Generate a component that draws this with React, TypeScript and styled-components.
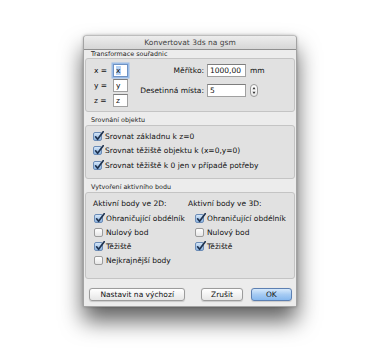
import * as React from 'react'
import styled, { createGlobalStyle } from 'styled-components'

const GlobalStyle = createGlobalStyle`
    html, body {
        margin: 0;
        padding: 0;
        background: #fff;
    }
    body {
        font-family: "DejaVu Sans", "Liberation Sans", sans-serif;
        color: #111;
    }
`

const Page = styled.div`
    width: 380px;
    height: 350px;
    box-sizing: border-box;
    padding-top: 35px;
    display: flex;
    justify-content: center;
    align-items: flex-start;
`

const Window = styled.div`
    width: 214px;
    box-sizing: border-box;
    display: flex;
    flex-direction: column;
    background: #ececec;
    border: 1px solid #a3a3a3;
    border-top-color: #bdbdbd;
    border-radius: 4px 4px 1px 1px;
    box-shadow: 0 14px 22px rgba(0, 0, 0, 0.62), 0 0 3px rgba(0, 0, 0, 0.25);
`

const TitleBar = styled.div`
    height: 13px;
    line-height: 13px;
    border-bottom: 1px solid #8f8f8f;
    border-radius: 3px 3px 0 0;
    background: linear-gradient(#ededed, #d6d6d6);
    text-align: center;
    font-size: 7.5px;
    color: #444;
`

const Body = styled.div`
    padding: 0 1px 5px;
    display: flex;
    flex-direction: column;
`

const Group = styled.div`
    margin-top: 3px;

    &:first-child {
        margin-top: 0;
    }
`

const GroupLabel = styled.div<{ $tight?: boolean }>`
    height: ${(p) => (p.$tight ? 8 : 10)}px;
    line-height: ${(p) => (p.$tight ? 8 : 10)}px;
    padding-left: 6px;
    font-size: 6.4px;
    color: #222;
`

const Box = styled.div<{ $height: number }>`
    height: ${(p) => p.$height}px;
    box-sizing: border-box;
    background: #e1e1e1;
    border: 1px solid #c4c4c4;
    border-radius: 3px;
    padding: 3px 0 0 7px;
`

const TransformBox = styled(Box)`
    display: flex;
    padding: 5px 0 0 8px;
`

const AxisCol = styled.div`
    width: 46px;
    display: flex;
    flex-direction: column;
    gap: 2px;
`

const AxisRow = styled.div`
    display: flex;
    align-items: center;
    height: 13px;
`

const AxisLabel = styled.span`
    width: 19px;
    font-size: 7.5px;
`

const Field = styled.div<{ $width: number; $focus?: boolean }>`
    width: ${(p) => p.$width}px;
    height: 13px;
    box-sizing: border-box;
    background: #fff;
    border: 1px solid ${(p) => (p.$focus ? '#6f93c4' : '#a0a0a0')};
    border-top-color: ${(p) => (p.$focus ? '#6f93c4' : '#7d7d7d')};
    box-shadow: ${(p) => (p.$focus ? '0 0 0 1.5px #9cbde8' : 'none')};
    padding-left: 2px;
    font-size: 7.5px;
    line-height: 11px;
    white-space: nowrap;
    overflow: hidden;
`

const Selected = styled.span`
    background: #b6d3f5;
    padding-right: 1px;
`

const ScaleGrid = styled.div`
    display: grid;
    grid-template-columns: 64px 39px auto;
    grid-auto-rows: 13px;
    column-gap: 3px;
    row-gap: 7px;
    align-items: center;
`

const ScaleLabel = styled.span`
    text-align: right;
    font-size: 7.5px;
    white-space: nowrap;
`

const Unit = styled.span`
    margin-left: 1px;
    font-size: 7.5px;
`

const Stepper = styled.div`
    margin-left: 1px;
    width: 8px;
    height: 13px;
    box-sizing: border-box;
    border: 1px solid #9a9a9a;
    border-radius: 4px;
    background: linear-gradient(#fff, #e9e9e9);
    display: flex;
    align-items: center;
    justify-content: center;
`

const CheckList = styled.div`
    display: flex;
    flex-direction: column;
`

const CheckRow = styled.label<{ $height?: number }>`
    display: flex;
    align-items: center;
    height: ${(p) => p.$height ?? 14}px;
    font-size: 7.5px;
    white-space: nowrap;
`

const CheckBox = styled.span<{ $on: boolean }>`
    position: relative;
    flex: none;
    width: 9px;
    height: 9px;
    box-sizing: border-box;
    margin-right: 3px;
    border-radius: 2px;
    border: 1px solid ${(p) => (p.$on ? '#6b8cb7' : '#9c9c9c')};
    background: ${(p) =>
        p.$on
            ? 'linear-gradient(#d5e6f8, #a9c8ea 55%, #8fb6e2)'
            : 'linear-gradient(#fff, #f1f1f1 55%, #e4e4e4)'};

    svg {
        position: absolute;
        left: -1px;
        top: -3px;
    }
`

const Columns = styled.div`
    display: flex;
`

const Column = styled.div<{ $width?: number; $indent?: number }>`
    width: ${(p) => (p.$width ? `${p.$width}px` : 'auto')};
    display: flex;
    flex-direction: column;

    label {
        padding-left: ${(p) => p.$indent ?? 1}px;
    }
`

const ColumnHead = styled.div`
    height: 15px;
    line-height: 15px;
    font-size: 7.5px;
`

const Buttons = styled.div`
    margin-top: 9px;
    padding: 0 3px 0 4px;
    display: flex;
    align-items: center;
    gap: 8px;
`

const Button = styled.button<{ $width: number; $primary?: boolean }>`
    width: ${(p) => p.$width}px;
    height: 13px;
    padding: 0;
    box-sizing: border-box;
    border-radius: 3px;
    border: 1px solid ${(p) => (p.$primary ? '#5d80b2' : '#9c9c9c')};
    background: ${(p) =>
        p.$primary
            ? 'linear-gradient(#d6e9fc, #a6cbf3 50%, #86b8ee)'
            : 'linear-gradient(#fff, #f3f3f3 50%, #e6e6e6)'};
    box-shadow: 0 0.5px 1px rgba(0, 0, 0, 0.15);
    font-family: inherit;
    font-size: 7.5px;
    line-height: 11px;
    color: #111;
`

const Spacer = styled.div`
    flex: 1;
`

const Check = ({ on, label, height }: { on: boolean; label: string; height?: number }) => (
    <CheckRow $height={height}>
        <CheckBox $on={on}>
            {on && (
                <svg width="12" height="12" viewBox="0 0 12 12">
                    <path
                        d="M2.6 6.8 L4.6 9.3 L10.2 1.8"
                        fill="none"
                        stroke="#1f3350"
                        strokeWidth="1.7"
                        strokeLinecap="round"
                        strokeLinejoin="round"
                    />
                </svg>
            )}
        </CheckBox>
        {label}
    </CheckRow>
)

const App: React.FC = () => (
    <Page>
        <GlobalStyle />
        <Window>
            <TitleBar>Konvertovat 3ds na gsm</TitleBar>
            <Body>
                <Group>
                    <GroupLabel $tight>Transformace souřadnic</GroupLabel>
                    <TransformBox $height={54}>
                        <AxisCol>
                            <AxisRow>
                                <AxisLabel>x =</AxisLabel>
                                <Field $width={15} $focus>
                                    <Selected>x</Selected>
                                </Field>
                            </AxisRow>
                            <AxisRow>
                                <AxisLabel>y =</AxisLabel>
                                <Field $width={15}>y</Field>
                            </AxisRow>
                            <AxisRow>
                                <AxisLabel>z =</AxisLabel>
                                <Field $width={15}>z</Field>
                            </AxisRow>
                        </AxisCol>
                        <ScaleGrid>
                            <ScaleLabel>Měřítko:</ScaleLabel>
                            <Field $width={39}>1000,00</Field>
                            <Unit>mm</Unit>
                            <ScaleLabel>Desetinná místa:</ScaleLabel>
                            <Field $width={39}>5</Field>
                            <Stepper>
                                <svg width="4" height="9" viewBox="0 0 4 9">
                                    <path d="M0.5 3.2 L2 1 L3.5 3.2 Z" fill="#333" />
                                    <path d="M0.5 5.8 L2 8 L3.5 5.8 Z" fill="#333" />
                                </svg>
                            </Stepper>
                        </ScaleGrid>
                    </TransformBox>
                </Group>
                <Group>
                    <GroupLabel>Srovnání objektu</GroupLabel>
                    <Box $height={54}>
                        <CheckList>
                            <Check on height={14.5} label="Srovnat základnu k z=0" />
                            <Check on height={14.5} label="Srovnat těžiště objektu k (x=0,y=0)" />
                            <Check on height={14.5} label="Srovnat těžiště k 0 jen v případě potřeby" />
                        </CheckList>
                    </Box>
                </Group>
                <Group>
                    <GroupLabel>Vytvoření aktivního bodu</GroupLabel>
                    <Box $height={87}>
                        <Columns>
                            <Column $width={95}>
                                <ColumnHead>Aktivní body ve 2D:</ColumnHead>
                                <Check on label="Ohraničující obdélník" />
                                <Check on={false} label="Nulový bod" />
                                <Check on label="Těžiště" />
                                <Check on={false} label="Nejkrajnější body" />
                            </Column>
                            <Column $indent={7}>
                                <ColumnHead>Aktivní body ve 3D:</ColumnHead>
                                <Check on label="Ohraničující obdélník" />
                                <Check on={false} label="Nulový bod" />
                                <Check on label="Těžiště" />
                            </Column>
                        </Columns>
                    </Box>
                </Group>
                <Buttons>
                    <Button $width={98}>Nastavit na výchozí</Button>
                    <Spacer />
                    <Button $width={42}>Zrušit</Button>
                    <Button $width={42} $primary>
                        OK
                    </Button>
                </Buttons>
            </Body>
        </Window>
    </Page>
)

export default App
